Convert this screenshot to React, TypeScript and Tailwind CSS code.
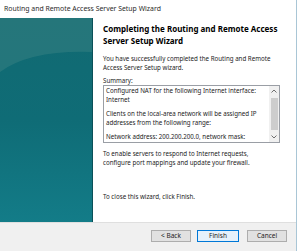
export default function App() {
  const font = { fontFamily: '"Noto Sans", "Liberation Sans", Arial, sans-serif' };
  return (
    <div className="w-[300px] h-[251px] bg-white flex overflow-hidden" style={font}>
      <div className="w-[297px] h-full border-r border-[#a9c6d6] flex flex-col">
        {/* title bar */}
        <div className="h-[18px] flex items-center pl-[4px] text-[6.9px] text-[#2b2b2b] leading-none">
          Routing and Remote Access Server Setup Wizard
        </div>

        {/* body */}
        <div className="h-[204px] flex">
          <div className="w-[93px] h-full relative bg-gradient-to-b from-[#116a72] via-[#0f6c76] to-[#137c88] border-r border-[#0a5058]">
            <svg className="absolute inset-0" width="92" height="204" viewBox="0 0 92 204">
              <path d="M0 0 H92 V34 Q30 32 0 54 Z" fill="#3f8585" opacity="0.45" />
            </svg>
          </div>
          <div className="flex-1 pl-[10px] pr-[10px] pt-[5px] text-[6.2px] text-[#1c1c1c] leading-[9px]">
            <div className="text-[8px] font-bold leading-[12px] text-black">
              Completing the Routing and Remote Access
              <br />
              Server Setup Wizard
            </div>
            <p className="mt-[7px]">
              You have successfully completed the Routing and Remote
              <br />
              Access Server Setup wizard.
            </p>
            <p className="mt-[4px]">Summary:</p>
            <div className="w-[177px] h-[58px] border border-[#9a9ea5] flex">
              <div className="flex-1 overflow-hidden pl-[2px] leading-[9px]">
                <p>Configured NAT for the following Internet interface:</p>
                <p>Internet</p>
                <p className="mt-[5px]">Clients on the local-area network will be assigned IP</p>
                <p>addresses from the following range:</p>
                <p className="mt-[5px]">Network address: 200.200.200.0, network mask:</p>
              </div>
              <div className="w-[10px] h-full bg-[#f0f0f0] flex flex-col items-center">
                <div className="h-[10px] flex items-center justify-center">
                  <svg width="6" height="4" viewBox="0 0 6 4">
                    <path d="M0.5 3.5 L3 1 L5.5 3.5" fill="none" stroke="#606060" strokeWidth="0.9" />
                  </svg>
                </div>
                <div className="w-[7px] flex-1 bg-[#cdcdcd] my-[2px]" />
                <div className="h-[10px] flex items-center justify-center">
                  <svg width="6" height="4" viewBox="0 0 6 4">
                    <path d="M0.5 0.5 L3 3 L5.5 0.5" fill="none" stroke="#606060" strokeWidth="0.9" />
                  </svg>
                </div>
              </div>
            </div>
            <p className="mt-[6px]">
              To enable servers to respond to Internet requests,
              <br />
              configure port mappings and update your firewall.
            </p>
            <p className="mt-[25px]">To close this wizard, click Finish.</p>
          </div>
        </div>

        {/* buttons */}
        <div className="flex-1 bg-[#f0f0f0] border-t border-[#dfdfdf] flex items-center justify-end pr-[9px] pb-[2px] text-[6.5px] text-[#1c1c1c]">
          <button className="w-[40px] h-[12px] bg-[#e1e1e1] border border-[#adadad] leading-none">&lt; Back</button>
          <button className="ml-[6px] w-[42px] h-[12px] bg-[#e5f1fb] border border-[#0078d7] leading-none">Finish</button>
          <button className="ml-[8px] w-[40px] h-[12px] bg-[#e1e1e1] border border-[#adadad] leading-none">Cancel</button>
        </div>
      </div>
    </div>
  );
}
